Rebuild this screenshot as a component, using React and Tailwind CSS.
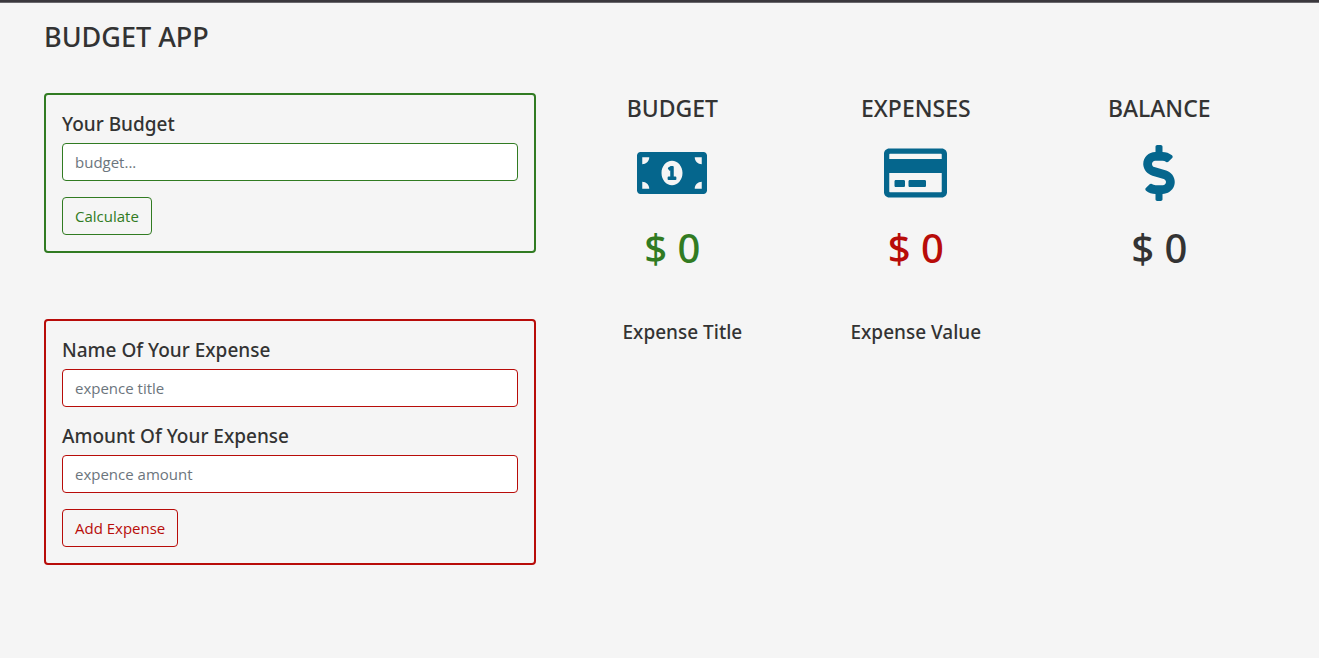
import React, { useState } from 'react';
import { FaDollarSign, FaMoneyBillAlt, FaRegCreditCard } from 'react-icons/fa';

const Field = ({ id, label, placeholder, color, value, onChange }) => (
    <div className="mb-4">
        <label htmlFor={id} className="mb-1.5 block font-['Noto_Sans',sans-serif] text-[19px] leading-[26px] font-medium">{label}</label>
        <input
            id={id}
            value={value}
            onChange={onChange}
            placeholder={placeholder}
            className={`block h-[38px] w-full rounded border bg-white px-3 text-[15px] placeholder:text-[#6c757d] focus:outline-none ${color}`}
        />
    </div>
);

const Stat = ({ title, icon, value, color }) => (
    <div className="flex flex-col items-center font-['Noto_Sans',sans-serif]">
        <h2 className="text-[23px] leading-[30px] font-medium">{title}</h2>
        <div className="mt-[22px] text-[#05668d]">{icon}</div>
        <p className={`mt-6 text-[40px] leading-[46px] font-medium ${color}`}>$ {value}</p>
    </div>
);

const App = () => {
    const [budgetInput, setBudgetInput] = useState('');
    const [title, setTitle] = useState('');
    const [amount, setAmount] = useState('');
    const [budget, setBudget] = useState(0);
    const [expenses, setExpenses] = useState([]);

    const total = expenses.reduce((sum, item) => sum + item.amount, 0);

    const handleBudget = (e) => {
        e.preventDefault();
        setBudget(Number(budgetInput) || 0);
        setBudgetInput('');
    };

    const handleExpense = (e) => {
        e.preventDefault();
        if (!title) return;
        setExpenses([...expenses, { id: expenses.length, title, amount: Number(amount) || 0 }]);
        setTitle('');
        setAmount('');
    };

    return (
        <div className="min-h-screen border-t-2 border-[#3a383d] bg-[#f5f5f5] font-['Open_Sans','Noto_Sans',sans-serif] text-[#333333]">
            <div className="border-t border-[#6a686d] pr-[38px] pl-[29px]">
                <h1 className="px-[15px] pt-4 font-['Noto_Sans',sans-serif] text-[27px] leading-9 font-medium">BUDGET APP</h1>

                <main className="mt-[38px] grid grid-cols-12">
                    <section className="col-span-5 px-[15px]">
                        <form onSubmit={handleBudget} className="rounded border-2 border-[#317b22] p-4">
                            <Field
                                id="budget"
                                label="Your Budget"
                                placeholder="budget..."
                                color="border-[#317b22]"
                                value={budgetInput}
                                onChange={(e) => setBudgetInput(e.target.value)}
                            />
                            <button type="submit" className="h-[38px] rounded border border-[#317b22] px-3 text-[15px] text-[#317b22]">
                                Calculate
                            </button>
                        </form>
                    </section>

                    <section className="col-span-7 grid grid-cols-3">
                        <Stat title="BUDGET" value={budget} color="text-[#317b22]" icon={<FaMoneyBillAlt className="h-14 w-[70px]" />} />
                        <Stat title="EXPENSES" value={total} color="text-[#b80c09]" icon={<FaRegCreditCard className="h-14 w-[63px]" />} />
                        <Stat title="BALANCE" value={budget - total} color="text-[#333333]" icon={<FaDollarSign className="h-14 w-8" />} />
                    </section>

                    <section className="col-span-5 mt-12 px-[15px]">
                        <form onSubmit={handleExpense} className="rounded border-2 border-[#b80c09] p-4">
                            <Field
                                id="expense-title"
                                label="Name Of Your Expense"
                                placeholder="expence title"
                                color="border-[#b80c09]"
                                value={title}
                                onChange={(e) => setTitle(e.target.value)}
                            />
                            <Field
                                id="expense-amount"
                                label="Amount Of Your Expense"
                                placeholder="expence amount"
                                color="border-[#b80c09]"
                                value={amount}
                                onChange={(e) => setAmount(e.target.value)}
                            />
                            <button type="submit" className="h-[38px] rounded border border-[#b80c09] px-3 text-[15px] text-[#b80c09]">
                                Add Expense
                            </button>
                        </form>
                    </section>

                    <section className="col-span-7 mt-12 px-[15px]">
                        <table className="w-full table-fixed text-center">
                            <thead>
                                <tr className="font-['Noto_Sans',sans-serif] text-[19px] leading-[26px]">
                                    <th className="font-medium">Expense Title</th>
                                    <th className="font-medium">Expense Value</th>
                                    <td />
                                </tr>
                            </thead>
                            <tbody>
                                {expenses.map((item) => (
                                    <tr key={item.id}>
                                        <td>{item.title}</td>
                                        <td>{item.amount}</td>
                                        <td />
                                    </tr>
                                ))}
                            </tbody>
                        </table>
                    </section>
                </main>
            </div>
        </div>
    );
};

export default App;
